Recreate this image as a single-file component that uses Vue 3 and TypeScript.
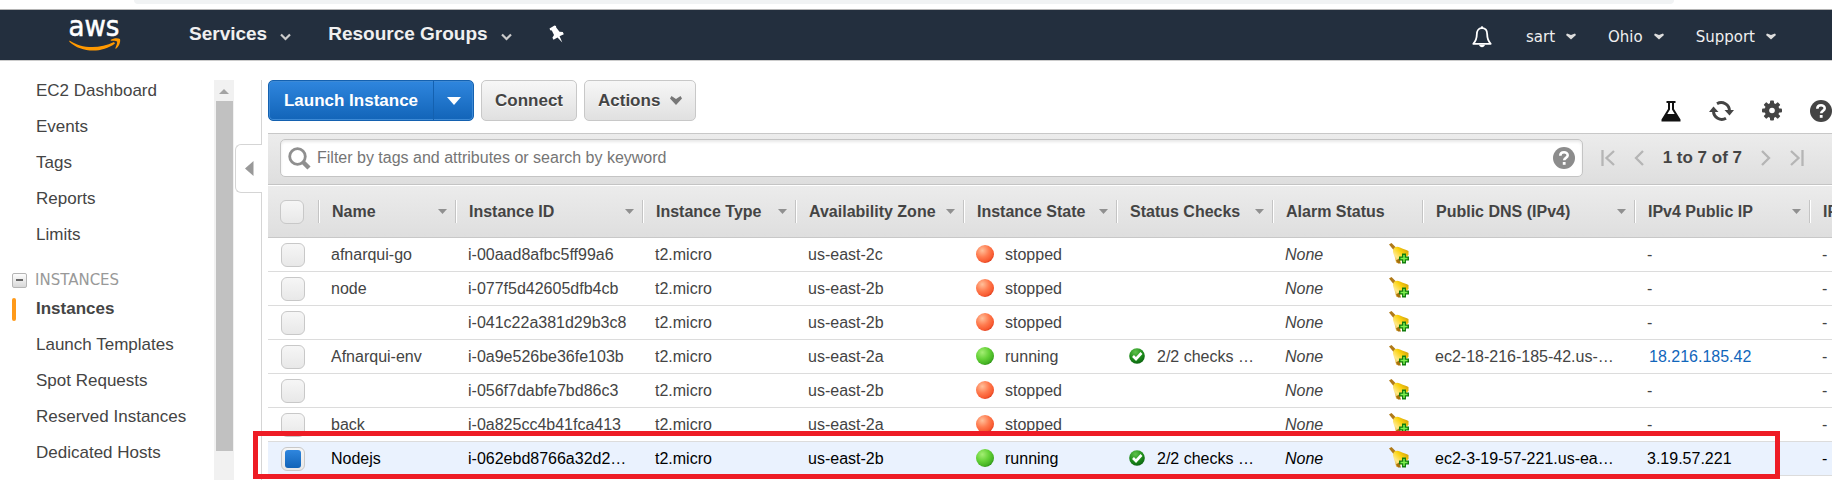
<script setup lang="ts">
import { ref, computed } from 'vue'

interface Instance {
  name: string
  id: string
  zone: string
  running: boolean
  dns: string
  ip: string
  link: boolean
  selected: boolean
}

interface Column {
  label: string
  key: string
  sortable: boolean
}

const columns: Column[] = [
  { label: 'Name', key: 'name', sortable: true },
  { label: 'Instance ID', key: 'id', sortable: true },
  { label: 'Instance Type', key: 'type', sortable: true },
  { label: 'Availability Zone', key: 'zone', sortable: true },
  { label: 'Instance State', key: 'state', sortable: true },
  { label: 'Status Checks', key: 'checks', sortable: true },
  { label: 'Alarm Status', key: 'alarm', sortable: false },
  { label: 'Public DNS (IPv4)', key: 'dns', sortable: true },
  { label: 'IPv4 Public IP', key: 'ip', sortable: true },
  { label: 'IP', key: 'ipv6', sortable: false },
]

function stopped(name: string, id: string, zone: string): Instance {
  return { name, id, zone, running: false, dns: '', ip: '-', link: false, selected: false }
}

const instances = ref<Instance[]>([
  stopped('afnarqui-go', 'i-00aad8afbc5ff99a6', 'us-east-2c'),
  stopped('node', 'i-077f5d42605dfb4cb', 'us-east-2b'),
  stopped('', 'i-041c22a381d29b3c8', 'us-east-2b'),
  { name: 'Afnarqui-env', id: 'i-0a9e526be36fe103b', zone: 'us-east-2a', running: true, dns: 'ec2-18-216-185-42.us-…', ip: '18.216.185.42', link: true, selected: false },
  stopped('', 'i-056f7dabfe7bd86c3', 'us-east-2b'),
  stopped('back', 'i-0a825cc4b41fca413', 'us-east-2a'),
  { name: 'Nodejs', id: 'i-062ebd8766a32d2…', zone: 'us-east-2b', running: true, dns: 'ec2-3-19-57-221.us-ea…', ip: '3.19.57.221', link: false, selected: true },
])

const allSelected = computed({
  get: () => instances.value.every((i) => i.selected),
  set: (v: boolean) => instances.value.forEach((i) => (i.selected = v)),
})

const topLinks = ['EC2 Dashboard', 'Events', 'Tags', 'Reports', 'Limits']
const instanceLinks = ['Instances', 'Launch Templates', 'Spot Requests', 'Reserved Instances', 'Dedicated Hosts']
const menus = ['sart', 'Ohio', 'Support']
const filter = ref('')
</script>

<template>
  <div class="page">
    <svg class="defs" width="0" height="0" aria-hidden="true">
      <defs>
        <radialGradient id="red-ball" cx="0.35" cy="0.3" r="0.75">
          <stop offset="0" stop-color="#ffc09a" />
          <stop offset="0.5" stop-color="#ff7c50" />
          <stop offset="0.85" stop-color="#f85a30" />
          <stop offset="1" stop-color="#d8391c" />
        </radialGradient>
        <radialGradient id="green-ball" cx="0.35" cy="0.3" r="0.75">
          <stop offset="0" stop-color="#a4ee74" />
          <stop offset="0.5" stop-color="#66d238" />
          <stop offset="0.85" stop-color="#45b324" />
          <stop offset="1" stop-color="#2b8f14" />
        </radialGradient>
        <radialGradient id="check-ball" cx="0.4" cy="0.25" r="0.8">
          <stop offset="0" stop-color="#5fc24a" />
          <stop offset="0.6" stop-color="#1c8a1a" />
          <stop offset="1" stop-color="#0a5f10" />
        </radialGradient>
        <linearGradient id="gold" x1="0" y1="1" x2="1" y2="0">
          <stop offset="0" stop-color="#c98a10" />
          <stop offset="0.3" stop-color="#ffe98a" />
          <stop offset="0.6" stop-color="#fbd20e" />
          <stop offset="1" stop-color="#c08a0a" />
        </linearGradient>
      </defs>
    </svg>

    <div class="browser-edge"><div class="address"></div></div>

    <header class="topnav">
      <a href="#" class="logo" aria-label="aws home">
        <svg width="52" height="32" viewBox="0 0 52 32">
          <text x="25" y="17" text-anchor="middle" class="logo-text">aws</text>
          <path d="M0.500 21.500C12 29.500 30 30.500 45 23L46 24.500C33 34.500 12 34 0.300 22.800Z" fill="#f90" />
          <path d="M41.500 21C44.500 19 49 18.800 51 20C51.800 23 50 27.500 47 29.800C46.400 30 46.200 29.600 46.400 29C47.400 26.500 48.600 23.500 48 22.500C47 21.400 44 21.600 42 21.800Z" fill="#f90" />
        </svg>
      </a>
      <nav class="primary">
        <button type="button" class="nav-main">Services
          <svg width="11" height="8" viewBox="0 0 11 8"><path d="M1 1.500L5.500 6L10 1.500" fill="none" stroke="#ccc" stroke-width="2.200" /></svg>
        </button>
        <button type="button" class="nav-main">Resource Groups
          <svg width="11" height="8" viewBox="0 0 11 8"><path d="M1 1.500L5.500 6L10 1.500" fill="none" stroke="#ccc" stroke-width="2.200" /></svg>
        </button>
        <button type="button" class="icon-btn" aria-label="Pin shortcuts">
          <svg width="16" height="18" viewBox="0 0 16 18"><path d="M5.500 0.500L7 1L7.200 2.500L10.500 6.800L13.800 7L14.800 9.200L10.600 11.300L13.300 17.500L8.500 12.600L4.500 14.800L3.400 12.800L5 10L2.800 5.500L1.200 5.200L0.500 3.600Z" fill="#fff" /></svg>
        </button>
      </nav>
      <nav class="account">
        <button type="button" class="icon-btn bell" aria-label="Notifications">
          <svg width="20" height="22" viewBox="0 0 20 22"><path d="M10 2.200C6 2.200 4.800 5.300 4.800 8.500C4.800 13 3.800 15 1.300 17.800H18.700C16.200 15 15.200 13 15.200 8.500C15.200 5.300 14 2.200 10 2.200Z" fill="none" stroke="#fff" stroke-width="1.800" stroke-linejoin="round" /><path d="M7 18.800H13C12.500 22 7.500 22 7 18.800Z" fill="#fff" /><circle cx="10" cy="1.500" r="1.300" fill="#fff" /></svg>
        </button>
        <button v-for="m in menus" :key="m" type="button" class="nav-sub">{{ m }}
          <svg width="10" height="7" viewBox="0 0 10 7"><path d="M1 0.500L5 2L9 0.500L10 2L5 6.500L0 2Z" fill="#ddd" /></svg>
        </button>
      </nav>
    </header>

    <div class="body">
      <aside class="sidebar">
        <nav class="menu">
          <a v-for="l in topLinks" :key="l" href="#">{{ l }}</a>
          <div class="group">
            <button type="button" class="collapse" aria-label="Collapse INSTANCES"></button>
            <span>INSTANCES</span>
          </div>
          <a v-for="(l, i) in instanceLinks" :key="l" href="#" :class="{ active: i === 0 }">{{ l }}</a>
        </nav>
        <div class="scroll">
          <svg width="20" height="21" viewBox="0 0 20 21"><path d="M5 14L10 9L15 14Z" fill="#a3a3a3" /></svg>
          <div class="thumb"></div>
        </div>
        <div class="divider">
          <div class="rule rule-top"></div>
          <button type="button" class="hide-tab" aria-label="Hide navigation">
            <svg width="9" height="15" viewBox="0 0 9 15"><path d="M0 7.500L8.500 0V15Z" fill="#999" /></svg>
          </button>
          <div class="rule rule-rest"></div>
        </div>
      </aside>

      <main class="content">
        <div class="toolbar">
          <div class="split">
            <button type="button" class="launch">Launch Instance</button>
            <button type="button" class="launch-more" aria-label="More launch options">
              <svg width="14" height="8" viewBox="0 0 14 8"><path d="M0 0H14L7 8Z" fill="#fff" /></svg>
            </button>
          </div>
          <button type="button" class="btn">Connect</button>
          <button type="button" class="btn">Actions
            <svg width="12" height="9" viewBox="0 0 12 9"><path d="M1.500 0L6 3L10.500 0L12 2.500L6 9L0 2.500Z" fill="#777" /></svg>
          </button>
          <div class="tools">
            <button type="button" class="icon-btn" aria-label="Experiments">
              <svg width="20" height="22" viewBox="0 0 20 22"><path d="M5.500 1H14.500V3H13V9L19.500 19.500V21.500H0.500V19.500L7 9V3H5.500Z" fill="#111" /><path d="M9 3H11V9.500L13.700 14H6.300L9 9.500Z" fill="#fff" /></svg>
            </button>
            <button type="button" class="icon-btn" aria-label="Refresh">
              <svg width="25" height="22" viewBox="0 0 25 22"><g fill="none" stroke="#444" stroke-width="3"><path d="M8 3.800A8.300 8.300 0 0 1 20.500 11" /><path d="M17 18.200A8.300 8.300 0 0 1 4.500 11" /></g><path d="M15.500 10H25L20.500 15.500Z" fill="#444" /><path d="M0 12H9.500L4.500 6.500Z" fill="#444" /></svg>
            </button>
            <button type="button" class="icon-btn" aria-label="Settings">
              <svg width="20" height="22" viewBox="0 0 20 22"><g fill="#444" transform="translate(10 10.500)"><rect v-for="a in [0, 45, 90, 135]" :key="a" x="-2" y="-10" width="4" height="20" rx="1" :transform="`rotate(${a})`" /><circle r="7.500" /></g><circle cx="10" cy="10.500" r="2.800" fill="#fff" /></svg>
            </button>
            <button type="button" class="icon-btn" aria-label="Help">
              <svg width="22" height="22" viewBox="0 0 22 22"><circle cx="11" cy="11" r="11" fill="#444" /><path d="M7.300 8.700C7.300 4.200 14.700 4.300 14.700 8.300C14.700 11 11.200 10.800 11.200 13.300" fill="none" stroke="#fff" stroke-width="2.600" /><rect x="9.800" y="15" width="2.800" height="2.800" fill="#fff" /></svg>
            </button>
          </div>
        </div>

        <div class="filterbar">
          <label class="search">
            <svg width="23" height="23" viewBox="0 0 23 23"><circle cx="9.500" cy="9.500" r="7.800" fill="none" stroke="#8f8f8f" stroke-width="2.800" /><path d="M15 15L21 21" stroke="#8f8f8f" stroke-width="4.500" /></svg>
            <input v-model="filter" type="text" aria-label="Filter instances" placeholder="Filter by tags and attributes or search by keyword" />
            <svg width="22" height="22" viewBox="0 0 22 22"><circle cx="11" cy="11" r="11" fill="#8c8c8c" /><path d="M7.300 8.700C7.300 4.200 14.700 4.300 14.700 8.300C14.700 11 11.200 10.800 11.200 13.300" fill="none" stroke="#fff" stroke-width="2.600" /><rect x="9.800" y="15" width="2.800" height="2.800" fill="#fff" /></svg>
          </label>
          <div class="pager">
            <button type="button" class="icon-btn" aria-label="First page"><svg width="14" height="18" viewBox="0 0 14 18"><path d="M1.500 1V17M13 2L5.500 9L13 16" fill="none" stroke="#b5b5b5" stroke-width="2.300" /></svg></button>
            <button type="button" class="icon-btn" aria-label="Previous page"><svg width="10" height="18" viewBox="0 0 10 18"><path d="M9 2L2 9L9 16" fill="none" stroke="#b5b5b5" stroke-width="2.300" /></svg></button>
            <span>1 to 7 of 7</span>
            <button type="button" class="icon-btn" aria-label="Next page"><svg width="10" height="18" viewBox="0 0 10 18"><path d="M1 2L8 9L1 16" fill="none" stroke="#b5b5b5" stroke-width="2.300" /></svg></button>
            <button type="button" class="icon-btn" aria-label="Last page"><svg width="14" height="18" viewBox="0 0 14 18"><path d="M12.500 1V17M1 2L8.500 9L1 16" fill="none" stroke="#b5b5b5" stroke-width="2.300" /></svg></button>
          </div>
        </div>

        <div class="grid">
          <table>
            <colgroup>
              <col class="c-check" />
              <col v-for="c in columns" :key="c.key" :class="`c-${c.key}`" />
            </colgroup>
            <thead>
              <tr>
                <th class="check"><input v-model="allSelected" type="checkbox" aria-label="Select all instances" /></th>
                <th v-for="c in columns" :key="c.key" scope="col">
                  <div class="head">
                    <span>{{ c.label }}</span>
                    <svg v-if="c.sortable" width="9" height="5" viewBox="0 0 9 5"><path d="M0 0H9L4.500 5Z" fill="#909090" /></svg>
                  </div>
                </th>
              </tr>
            </thead>
            <tbody>
              <tr v-for="row in instances" :key="row.id" :class="{ selected: row.selected }">
                <td class="check"><input v-model="row.selected" type="checkbox" :aria-label="`Select ${row.id}`" /></td>
                <td>{{ row.name }}</td>
                <td>{{ row.id }}</td>
                <td>t2.micro</td>
                <td>{{ row.zone }}</td>
                <td>
                  <div class="cell state">
                    <svg width="18" height="20" viewBox="0 0 18 20"><circle cx="9" cy="9" r="9" :fill="row.running ? 'url(#green-ball)' : 'url(#red-ball)'" /></svg>
                    <span>{{ row.running ? 'running' : 'stopped' }}</span>
                  </div>
                </td>
                <td>
                  <div v-if="row.running" class="cell checks">
                    <svg width="16" height="18" viewBox="0 0 16 18"><circle cx="8" cy="8" r="7.800" fill="url(#check-ball)" /><path d="M4 8L7 11L12.500 5" fill="none" stroke="#fff" stroke-width="2.600" /></svg>
                    <span>2/2 checks …</span>
                  </div>
                </td>
                <td>
                  <div class="cell alarm">
                    <em>None</em>
                    <svg width="20" height="24" viewBox="0 0 20 24">
                      <path d="M0 1.500L2.500 0L7 4.500L4.500 7Z" fill="#b07a18" />
                      <path d="M4.500 6C5.500 3.500 8.500 3 11 4.500C14 6 16.500 6.500 19.500 8V12L9.500 20H7.500C6 17.500 6.500 15 5 12C4 9.500 3.500 8 4.500 6Z" fill="url(#gold)" />
                      <path d="M7 17.500L9 20.500H12L10 15.500Z" fill="#a8700c" />
                      <path d="M13 10.500H17V13.500H20V17.500H17V20.500H13V17.500H10V13.500H13Z" fill="#127d10" />
                      <path d="M15 12V19M11.500 15.500H18.500" stroke="#7df04c" stroke-width="1.500" />
                    </svg>
                  </div>
                </td>
                <td>{{ row.dns }}</td>
                <td><a v-if="row.link" href="#" class="ip-link">{{ row.ip }}</a><template v-else>{{ row.ip }}</template></td>
                <td>-</td>
              </tr>
            </tbody>
          </table>
          <div class="highlight"></div>
        </div>
      </main>
    </div>
  </div>
</template>

<style>
body {
  margin: 0;
  background: #fff;
}
</style>

<style scoped>
* {
  box-sizing: border-box;
}
.page {
  height: 100vh;
  overflow: hidden;
  display: flex;
  flex-direction: column;
  font-family: "Liberation Sans", Arial, sans-serif;
  font-size: 16px;
  color: #444;
}
.defs {
  position: absolute;
}
button {
  font: inherit;
  color: inherit;
  background: none;
  border: 0;
  padding: 0;
  cursor: pointer;
}
a {
  color: inherit;
  text-decoration: none;
}
svg {
  display: block;
  flex: none;
}
.icon-btn {
  display: flex;
}

.browser-edge {
  flex: none;
  height: 10px;
  padding: 0 158px 0 134px;
  border-bottom: 1px solid #b4b4b4;
}
.address {
  height: 4px;
  background: #f1f3f4;
  border-radius: 0 0 12px 12px;
}
.topnav {
  flex: none;
  display: flex;
  align-items: center;
  height: 51px;
  padding: 0 56px 0 69px;
  background: #232f3e;
  border-bottom: 1px solid #ccc;
  color: #f0f0f0;
  text-shadow: 0 1px 1px #000;
}
.logo svg {
  overflow: visible;
}
.logo-text {
  font-family: "DejaVu Sans Condensed", "DejaVu Sans", sans-serif;
  font-size: 29px;
  fill: #fff;
  stroke: #fff;
  stroke-width: 0.5px;
  text-shadow: none;
}
.primary {
  display: flex;
  align-items: center;
  gap: 37px;
  margin-left: 68px;
  padding-bottom: 2px;
}
.nav-main {
  display: flex;
  align-items: center;
  gap: 13px;
  font-size: 19px;
  font-weight: bold;
}
.nav-main svg {
  margin-top: 5px;
}
.account {
  display: flex;
  align-items: center;
  gap: 32px;
  margin-left: auto;
  padding-top: 3px;
}
.bell {
  margin-right: 2px;
}
.nav-sub {
  display: flex;
  align-items: center;
  gap: 11px;
  font-family: "DejaVu Sans", Verdana, sans-serif;
  font-size: 15px;
}

.body {
  flex: 1;
  min-height: 0;
  display: flex;
}
.sidebar {
  flex: none;
  width: 268px;
  display: flex;
}
.menu {
  width: 214px;
  padding-top: 12px;
  font-size: 17px;
}
.menu a {
  display: flex;
  align-items: center;
  height: 36px;
  padding-left: 36px;
}
.menu a.active {
  font-weight: bold;
  padding-left: 12px;
}
.menu a.active::before {
  content: "";
  width: 4px;
  height: 23px;
  margin-right: 20px;
  border-radius: 2px;
  background: #ff9a1a;
}
.group {
  display: flex;
  align-items: center;
  gap: 8px;
  height: 22px;
  margin-top: 16px;
  padding-left: 12px;
  font-family: "DejaVu Sans", Verdana, sans-serif;
  font-size: 15px;
  color: #999;
}
.collapse {
  display: flex;
  align-items: center;
  justify-content: center;
  width: 15px;
  height: 15px;
  border: 1px solid #b5b5b5;
  border-radius: 2px;
  background: linear-gradient(#fdfdfd, #d8d8d8);
}
.collapse::before {
  content: "";
  width: 7px;
  height: 2px;
  background: #666;
}
.scroll {
  width: 20px;
  margin-top: 19px;
  background: #f1f1f1;
}
.thumb {
  height: calc(100% - 50px);
  margin: 0 1px 0 2px;
  background: #c1c1c1;
}
.divider {
  width: 28px;
  margin-top: 19px;
  display: flex;
  flex-direction: column;
}
.rule {
  border-right: 1px solid #d5d5d5;
}
.rule-top {
  height: 64px;
}
.rule-rest {
  flex: 1;
}
.hide-tab {
  display: flex;
  align-items: center;
  height: 49px;
  margin-left: 1px;
  padding-left: 9px;
  border: 1px solid #d5d5d5;
  border-right: 0;
  border-radius: 6px 0 0 6px;
}

.content {
  flex: 1;
  min-width: 0;
}
.toolbar {
  display: flex;
  align-items: flex-start;
  gap: 7px;
  padding-top: 19px;
  padding-bottom: 11px;
  font-size: 17px;
  font-weight: bold;
}
.split {
  display: flex;
  height: 41px;
  border: 1px solid #1461b0;
  border-radius: 5px;
  background: linear-gradient(#2f86de, #1264b8);
  color: #fff;
  text-shadow: 0 1px 1px #0b4a8c;
  box-shadow: inset 0 0 0 1px #3d8ad6;
}
.launch {
  width: 164px;
  white-space: nowrap;
}
.launch-more {
  display: flex;
  align-items: center;
  justify-content: center;
  width: 40px;
  border-left: 1px solid #1461b0;
}
.btn {
  display: flex;
  align-items: center;
  gap: 10px;
  height: 41px;
  padding: 0 13px;
  border: 1px solid #c8c8c8;
  border-radius: 5px;
  background: linear-gradient(#f7f7f7, #e0e0e0);
  text-shadow: 0 1px 0 #fff;
}
.tools {
  display: flex;
  align-items: center;
  gap: 28px;
  margin-left: auto;
  padding-top: 20px;
}
.filterbar {
  display: flex;
  align-items: center;
  gap: 18px;
  height: 52px;
  padding: 0 28px 2px 12px;
  border-top: 1px solid #c8c8c8;
  border-bottom: 1px solid #c4c4c4;
  background: linear-gradient(#ececec, #dedede);
}
.search {
  flex: 1;
  display: flex;
  align-items: center;
  height: 38px;
  padding: 0 7px;
  border: 1px solid #c4c4c4;
  border-radius: 5px;
  background: #fff;
  box-shadow: inset 0 2px 3px #e8e8e8;
}
.search input {
  flex: 1;
  min-width: 0;
  margin-left: 6px;
  padding: 0;
  border: 0;
  outline: 0;
  background: none;
  font: inherit;
  color: #444;
}
.search input::placeholder {
  color: #757575;
  opacity: 1;
}
.pager {
  display: flex;
  align-items: center;
  gap: 19px;
  font-size: 17px;
  font-weight: bold;
  white-space: nowrap;
}

.grid {
  position: relative;
}
table {
  width: 100%;
  table-layout: fixed;
  border-collapse: separate;
  border-spacing: 0;
}
.c-check { width: 50px; }
.c-name { width: 137px; }
.c-id { width: 187px; }
.c-type { width: 153px; }
.c-zone { width: 168px; }
.c-state { width: 153px; }
.c-checks { width: 156px; }
.c-alarm { width: 150px; }
.c-dns { width: 212px; }
.c-ip { width: 175px; }
.c-ipv6 { width: auto; }
thead tr {
  background: linear-gradient(#ececec, #dedede);
}
th {
  height: 53px;
  padding: 0;
  border-top: 1px solid #fff;
  border-bottom: 1px solid #c8c8c8;
  text-align: left;
  overflow: hidden;
}
.head {
  display: flex;
  align-items: center;
  justify-content: space-between;
  height: 23px;
  padding: 0 8px 0 13px;
  border-left: 1px solid #c4c4c4;
  box-shadow: inset 1px 0 0 #fff;
  white-space: nowrap;
}
td {
  height: 34px;
  padding: 0 0 0 13px;
  border-bottom: 1px solid #dcdcdc;
  white-space: nowrap;
  overflow: hidden;
}
th.check,
td.check {
  padding: 0 0 0 12px;
}
td.check {
  padding-left: 13px;
}
input[type="checkbox"] {
  appearance: none;
  display: block;
  width: 24px;
  height: 24px;
  margin: 0;
  border: 1px solid #c8c8c8;
  border-radius: 6px;
  background: linear-gradient(#f6f6f6, #e8e8e8);
}
input[type="checkbox"]:checked {
  display: flex;
  align-items: center;
  justify-content: center;
}
input[type="checkbox"]:checked::before {
  content: "";
  width: 16px;
  height: 18px;
  border-radius: 3px;
  background: linear-gradient(#2f86de, #1264b8);
}
.selected {
  background: #eaf2fe;
  color: #000;
}
.cell {
  display: flex;
  align-items: center;
}
.state {
  gap: 11px;
}
.checks {
  gap: 12px;
}
.alarm {
  justify-content: space-between;
  padding-right: 13px;
}
.ip-link {
  padding-left: 2px;
  color: #1166bb;
}
.highlight {
  position: absolute;
  left: -15px;
  right: 52px;
  bottom: -3px;
  height: 48px;
  border: 5px solid #ee1c25;
  pointer-events: none;
}
</style>
